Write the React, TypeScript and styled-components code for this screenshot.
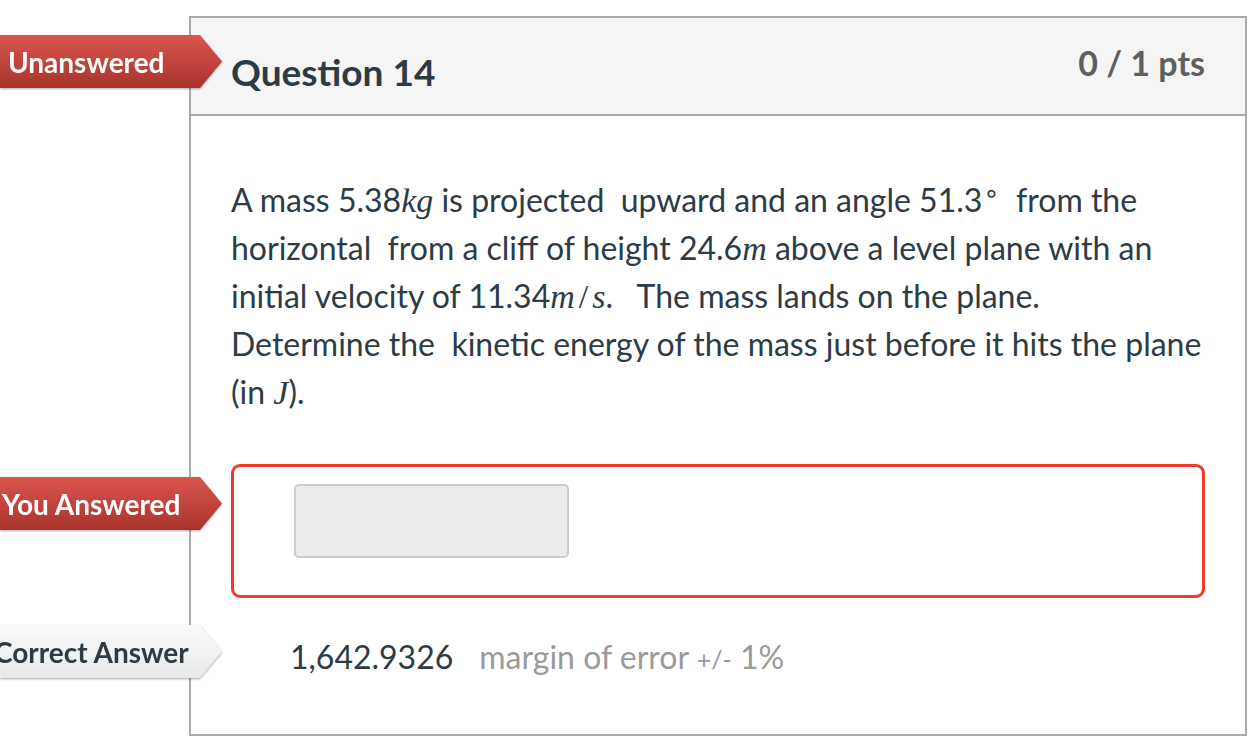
import React from "react";
import styled, { createGlobalStyle, css } from "styled-components";

const Global = createGlobalStyle`
  html, body { margin: 0; padding: 0; background: #fff; }
  body { font-family: Lato, "Open Sans", sans-serif; color: #2d3b45; }
`;

const Page = styled.div`
  width: 1256px;
  height: 750px;
  overflow: hidden;
  padding: 16px 0 0 189px;
  box-sizing: border-box;
`;

const QuestionBox = styled.div`
  width: 1058px;
  height: 720px;
  box-sizing: border-box;
  border: 2px solid #aaaaaa;
  display: flex;
  flex-direction: column;
`;

const Header = styled.div`
  position: relative;
  height: 98px;
  box-sizing: border-box;
  background: #f5f5f5;
  border-bottom: 2px solid #aaaaaa;
  display: flex;
  justify-content: space-between;
  padding: 0 40px;
`;

const Title = styled.h2`
  margin: 0;
  padding-top: 32px;
  font-size: 37px;
  font-weight: 700;
  line-height: 44px;
  color: #2d3b45;
`;

const Points = styled.div`
  padding-top: 23px;
  font-size: 34px;
  font-weight: 700;
  line-height: 44px;
  color: #5f5f5f;
`;

const Body = styled.div`
  padding: 60px 40px 0 40px;
  display: flex;
  flex-direction: column;
`;

const Text = styled.p`
  margin: 0;
  font-size: 32px;
  line-height: 48px;
  color: #2d3b45;
`;

const M = styled.span`
  font-family: "Liberation Serif", "DejaVu Serif", serif;
  font-style: italic;
  font-size: 34px;
  line-height: 1;
`;

const Slash = styled.span`
  font-family: "Liberation Serif", serif;
  font-size: 34px;
  line-height: 1;
  margin: 0 4px;
`;

const Deg = styled.sup`
  font-family: "DejaVu Sans", sans-serif;
  font-size: 26px;
  vertical-align: 10px;
  line-height: 0;
  margin-left: 1px;
`;

const AnswerRow = styled.div`
  position: relative;
  margin-top: 48px;
`;

const AnswerBox = styled.div`
  height: 134px;
  box-sizing: border-box;
  border: 3px solid #ee3b2a;
  border-radius: 9px;
  padding: 17px 0 0 60px;
`;

const Input = styled.div`
  width: 275px;
  height: 74px;
  box-sizing: border-box;
  background: #ececec;
  border: 2px solid #cccccc;
  border-radius: 5px;
`;

const CorrectRow = styled.div`
  position: relative;
  margin-top: 35px;
  padding-left: 59px;
  display: flex;
  align-items: baseline;
  gap: 26px;
  line-height: 48px;
`;

const AnswerValue = styled.span`
  font-size: 32px;
  color: #2d3b45;
`;

const Margin = styled.span`
  font-size: 32px;
  color: #9a9a9a;
`;

const Small = styled.span`
  font-size: 25px;
`;

const FlagWrap = styled.div<{ $top: number; $left: number }>`
  position: absolute;
  left: ${(p) => p.$left}px;
  top: ${(p) => p.$top}px;
  filter: drop-shadow(0 1px 1px rgba(0, 0, 0, 0.35));
`;

const FlagShape = styled.div<{ $variant: "red" | "gray"; $indent: number }>`
  width: 222px;
  height: 53px;
  box-sizing: border-box;
  padding-left: ${(p) => p.$indent}px;
  display: flex;
  align-items: center;
  font-size: 28px;
  font-weight: 700;
  white-space: nowrap;
  overflow: hidden;
  clip-path: polygon(0 0, 200px 0, 100% 50%, 200px 100%, 0 100%);
  ${(p) =>
    p.$variant === "red"
      ? css`
          background: linear-gradient(#d9564e, #a9332c);
          color: #ffffff;
        `
      : css`
          background: linear-gradient(#fbfbfb, #e8e8e8);
          color: #2d3b45;
        `}
`;

const FlagLabel = styled.span<{ $shift: number }>`
  margin-left: ${(p) => p.$shift}px;
`;

export default function App() {
  return (
    <>
      <Global />
      <Page>
        <QuestionBox>
          <Header>
            <FlagWrap $top={17} $left={-191}>
              <FlagShape $variant="red" $indent={8}>
                Unanswered
              </FlagShape>
            </FlagWrap>
            <Title>Question 14</Title>
            <Points>0 / 1 pts</Points>
          </Header>
          <Body>
            <Text>
              A mass 5.38<M>kg</M> is projected&nbsp; upward and an angle 51.3<Deg>∘</Deg> &nbsp;from the horizontal&nbsp;
              from a cliff of height 24.6<M>m</M> above a level plane with an initial velocity of 11.34<M>m</M>
              <Slash>/</Slash>
              <M>s</M>.&nbsp;&nbsp; The mass lands on the plane.
              <br />
              Determine the&nbsp; kinetic energy of the mass just before it hits the plane (in <M>J</M>).
            </Text>
            <AnswerRow>
              <FlagWrap $top={13} $left={-231}>
                <FlagShape $variant="red" $indent={2}>
                  You Answered
                </FlagShape>
              </FlagWrap>
              <AnswerBox>
                <Input />
              </AnswerBox>
            </AnswerRow>
            <CorrectRow>
              <FlagWrap $top={-8} $left={-231}>
                <FlagShape $variant="gray" $indent={0}>
                  <FlagLabel $shift={-6}>Correct Answer</FlagLabel>
                </FlagShape>
              </FlagWrap>
              <AnswerValue>1,642.9326</AnswerValue>
              <Margin>
                margin of error <Small>+/-</Small> 1%
              </Margin>
            </CorrectRow>
          </Body>
        </QuestionBox>
      </Page>
    </>
  );
}
